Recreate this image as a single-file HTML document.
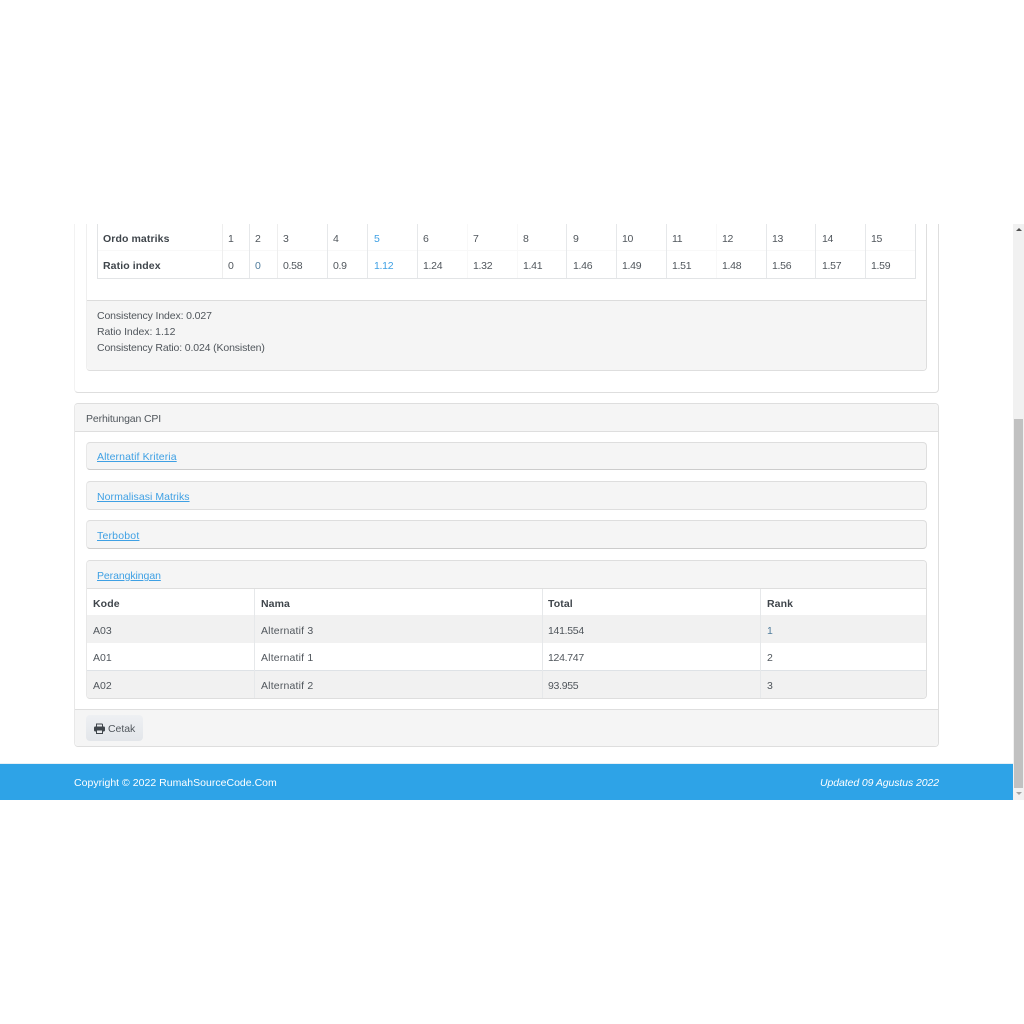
<!DOCTYPE html>
<html><head><meta charset="utf-8"><style>
html,body{margin:0;padding:0;background:#fff;width:1024px;height:1024px;overflow:hidden}
body{position:relative;font-family:"Liberation Sans",sans-serif;font-size:10.5px;color:#50565c}
.a{position:absolute;box-sizing:border-box}
.t{position:absolute;white-space:nowrap;line-height:14px;margin-top:1px}
.n{letter-spacing:-.3px}
.b{font-weight:bold;color:#3f454b;letter-spacing:.1px}
.l{color:#3ea0e4;text-decoration:underline}
.c{border:1px solid #dedede;border-left-color:#e8e8e8;border-radius:4px}
.h{background:#f5f5f5}
.v{position:absolute;width:1px;background:#e6e8ea}
</style></head><body>
<div class="a" style="left:0;top:224px;width:1024px;height:576px;overflow:hidden">
<div class="a c" style="left:74px;top:-20px;width:865px;height:189px;border-left-color:#f2f2f2"></div>
<div class="a c" style="left:86px;top:-20px;width:841px;height:167px;border-left-color:#efefef"></div>
<div class="a" style="left:87px;top:76px;width:839px;height:70px;background:#f5f5f5;border-top:1px solid #dcdcdc;border-radius:0 0 4px 4px"></div>
<div class="a" style="left:97px;top:0;width:819px;height:55px;border:1px solid #e2e4e6;border-top:0"></div>
<div class="a" style="left:98px;top:26px;width:817px;height:1px;background:#f8f8f8"></div>
</div>
<div class="v" style="left:222px;top:224px;height:54px;background:#eeeeee"></div>
<div class="v" style="left:249px;top:224px;height:54px"></div>
<div class="v" style="left:277px;top:224px;height:54px;background:#eeeeee"></div>
<div class="v" style="left:327px;top:224px;height:54px"></div>
<div class="v" style="left:367px;top:224px;height:54px"></div>
<div class="v" style="left:417px;top:224px;height:54px"></div>
<div class="v" style="left:467px;top:224px;height:54px;background:#f8f8f8"></div>
<div class="v" style="left:517px;top:224px;height:54px;background:#f8f8f8"></div>
<div class="v" style="left:566px;top:224px;height:54px"></div>
<div class="v" style="left:616px;top:224px;height:54px"></div>
<div class="v" style="left:666px;top:224px;height:54px"></div>
<div class="v" style="left:716px;top:224px;height:54px;background:#f8f8f8"></div>
<div class="v" style="left:766px;top:224px;height:54px"></div>
<div class="v" style="left:815px;top:224px;height:54px"></div>
<div class="v" style="left:865px;top:224px;height:54px"></div>

<div class="t b" style="left:103px;top:231px">Ordo matriks</div>
<div class="t b" style="left:103px;top:258px">Ratio index</div>
<div class="t" style="left:228px;top:231px">1</div><div class="t" style="left:228px;top:258px">0</div>
<div class="t" style="left:255px;top:231px">2</div><div class="t" style="left:255px;top:258px;color:#4f7c9c">0</div>
<div class="t" style="left:283px;top:231px">3</div><div class="t n" style="left:283px;top:258px">0.58</div>
<div class="t" style="left:333px;top:231px">4</div><div class="t n" style="left:333px;top:258px">0.9</div>
<div class="t" style="left:374px;top:231px;color:#3ea0e4">5</div><div class="t n" style="left:374px;top:258px;color:#3ea0e4">1.12</div>
<div class="t" style="left:423px;top:231px">6</div><div class="t n" style="left:423px;top:258px">1.24</div>
<div class="t" style="left:473px;top:231px">7</div><div class="t n" style="left:473px;top:258px">1.32</div>
<div class="t" style="left:523px;top:231px">8</div><div class="t n" style="left:523px;top:258px">1.41</div>
<div class="t" style="left:573px;top:231px">9</div><div class="t n" style="left:573px;top:258px">1.46</div>
<div class="t n" style="left:622px;top:231px">10</div><div class="t n" style="left:622px;top:258px">1.49</div>
<div class="t n" style="left:672px;top:231px">11</div><div class="t n" style="left:672px;top:258px">1.51</div>
<div class="t n" style="left:722px;top:231px">12</div><div class="t n" style="left:722px;top:258px">1.48</div>
<div class="t n" style="left:772px;top:231px">13</div><div class="t n" style="left:772px;top:258px">1.56</div>
<div class="t n" style="left:822px;top:231px">14</div><div class="t n" style="left:822px;top:258px">1.57</div>
<div class="t n" style="left:871px;top:231px">15</div><div class="t n" style="left:871px;top:258px">1.59</div>

<div class="t" style="left:97px;top:308px;letter-spacing:-.13px">Consistency Index: 0.027</div>
<div class="t" style="left:97px;top:324px;letter-spacing:-.06px">Ratio Index: 1.12</div>
<div class="t" style="left:97px;top:340px;letter-spacing:-.14px">Consistency Ratio: 0.024 (Konsisten)</div>

<div class="a c" style="left:74px;top:403px;width:865px;height:344px"></div>
<div class="a h" style="left:75px;top:404px;width:863px;height:28px;border-bottom:1px solid #dedede;border-radius:4px 4px 0 0"></div>
<div class="t" style="left:86px;top:411px;letter-spacing:-.13px">Perhitungan CPI</div>

<div class="a c h" style="left:86px;top:442px;width:841px;height:28px;border-bottom-color:#ccc"></div>
<div class="t l" style="left:97px;top:449px;letter-spacing:.11px">Alternatif Kriteria</div>
<div class="a c h" style="left:86px;top:481px;width:841px;height:29px"></div>
<div class="t l" style="left:97px;top:489px;letter-spacing:.05px">Normalisasi Matriks</div>
<div class="a c h" style="left:86px;top:520px;width:841px;height:29px;border-bottom-color:#ccc"></div>
<div class="t l" style="left:97px;top:528px;letter-spacing:.2px">Terbobot</div>

<div class="a c" style="left:86px;top:560px;width:841px;height:139px;overflow:hidden">
<div class="a h" style="left:0;top:0;width:839px;height:28px;border-bottom:1px solid #dedede"></div>
<div class="a" style="left:0;top:54px;width:839px;height:28px;background:#f1f1f1"></div>
<div class="a" style="left:0;top:109px;width:839px;height:28px;background:#f1f1f1;border-top:1px solid #dee2e6"></div>
</div>
<div class="t l" style="left:97px;top:568px;letter-spacing:-.08px">Perangkingan</div>
<div class="v" style="left:254px;top:589px;height:109px"></div>
<div class="v" style="left:542px;top:589px;height:109px"></div>
<div class="v" style="left:760px;top:589px;height:109px"></div>

<div class="t b" style="left:93px;top:596px">Kode</div><div class="t b" style="left:261px;top:596px">Nama</div><div class="t b" style="left:548px;top:596px">Total</div><div class="t b" style="left:767px;top:596px">Rank</div>
<div class="t" style="left:93px;top:623px">A03</div><div class="t" style="left:261px;top:623px;letter-spacing:.18px">Alternatif 3</div><div class="t n" style="left:548px;top:623px">141.554</div><div class="t" style="left:767px;top:623px;color:#4f7c9c">1</div>
<div class="t" style="left:93px;top:650px">A01</div><div class="t" style="left:261px;top:650px;letter-spacing:.18px">Alternatif 1</div><div class="t n" style="left:548px;top:650px">124.747</div><div class="t" style="left:767px;top:650px">2</div>
<div class="t" style="left:93px;top:678px">A02</div><div class="t" style="left:261px;top:678px;letter-spacing:.18px">Alternatif 2</div><div class="t n" style="left:548px;top:678px">93.955</div><div class="t" style="left:767px;top:678px">3</div>

<div class="a h" style="left:75px;top:709px;width:863px;height:37px;border-top:1px solid #dedede;border-radius:0 0 4px 4px"></div>
<div class="a" style="left:86px;top:715px;width:57px;height:26px;border-radius:4px;background:linear-gradient(#eef0f3,#e3e6ea)"></div>
<svg class="a" style="left:94px;top:723px" width="11" height="11" viewBox="0 0 11 11"><path d="M2.5 1h5.5l.5.5V4h-6z" fill="#e8eaed" stroke="#3f454b"/><rect x="0" y="3.5" width="11" height="5" rx="1.2" fill="#3f454b"/><rect x="2.5" y="7" width="6" height="3.5" fill="#e8eaed" stroke="#3f454b"/></svg>
<div class="t" style="left:108px;top:721px;letter-spacing:-.05px">Cetak</div>

<div class="a" style="left:0;top:763px;width:1013px;height:1px;background:#e6f0f6"></div>
<div class="a" style="left:0;top:764px;width:1013px;height:36px;background:#2ea3e7"></div>
<div class="t" style="left:74px;top:775px;color:#fff;letter-spacing:.02px">Copyright © 2022 RumahSourceCode.Com</div>
<div class="t" style="right:85px;top:775px;color:#fff;font-style:italic;letter-spacing:-.09px">Updated 09 Agustus 2022</div>

<div class="a" style="left:1013px;top:224px;width:11px;height:576px;background:#f1f1f1"></div>
<div class="a" style="left:1014px;top:419px;width:9px;height:369px;background:#c1c1c1"></div>
<div class="a" style="left:1016px;top:228px;width:0;height:0;border-left:3px solid transparent;border-right:3px solid transparent;border-bottom:3px solid #505050"></div>
<div class="a" style="left:1016px;top:792px;width:0;height:0;border-left:3px solid transparent;border-right:3px solid transparent;border-top:3px solid #a3a3a3"></div>
</body></html>
